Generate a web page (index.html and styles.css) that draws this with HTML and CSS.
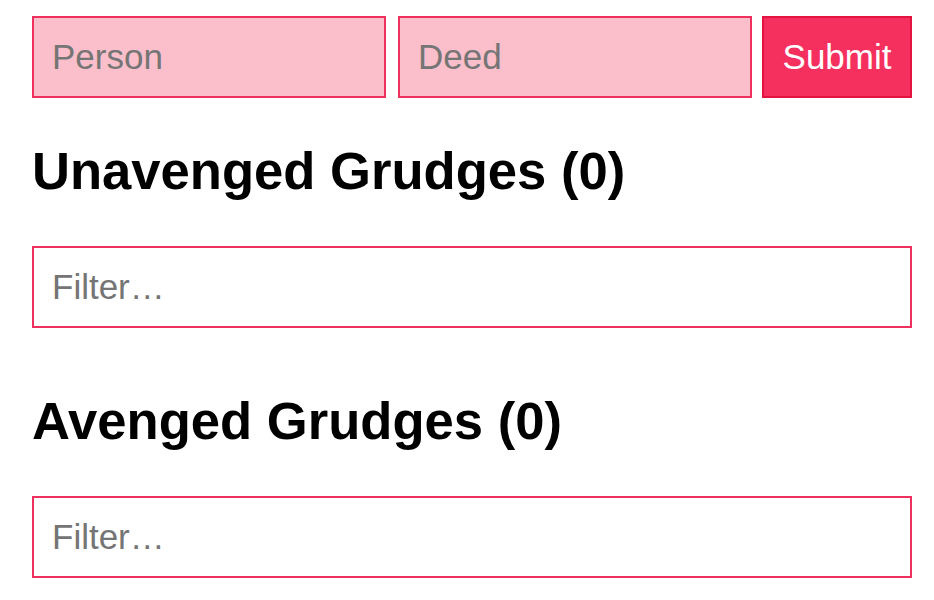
FILE: index.html
```html
<!DOCTYPE html>
<html>
<head>
<meta charset="utf-8">
<link rel="stylesheet" href="styles.css">
</head>
<body>
<main class="app">
  <form class="new-grudge">
    <input class="field field-person" type="text" placeholder="Person">
    <input class="field field-deed" type="text" placeholder="Deed">
    <button class="submit" type="button">Submit</button>
  </form>
  <section class="grudges grudges-unavenged">
    <h2 class="grudges-title">Unavenged Grudges (0)</h2>
    <input class="filter" type="text" placeholder="Filter…">
  </section>
  <section class="grudges grudges-avenged">
    <h2 class="grudges-title">Avenged Grudges (0)</h2>
    <input class="filter" type="text" placeholder="Filter…">
  </section>
</main>
</body>
</html>
```
FILE: styles.css
```css
html, body {
  margin: 0;
  padding: 0;
  background: #ffffff;
}

body {
  font-family: "Liberation Sans", Arial, sans-serif;
  color: #000000;
}

.app {
  width: 880px;
  padding: 16px 0 0 32px;
}

.new-grudge {
  display: flex;
  margin: 0;
}

.field,
.filter {
  box-sizing: border-box;
  height: 82px;
  border: 2px solid #f0305c;
  padding: 0 18px;
  font-family: "Liberation Sans", Arial, sans-serif;
  font-size: 35px;
  color: #000;
  outline: none;
  border-radius: 0;
}

.field::placeholder,
.filter::placeholder {
  color: #757575;
  opacity: 1;
}

.field {
  width: 354px;
  background: #fbbfcb;
}

.field-person {
  margin-right: 12px;
}

.field-deed {
  margin-right: 10px;
}

.submit {
  box-sizing: border-box;
  width: 150px;
  height: 82px;
  border: 2px solid #e3143f;
  background: #f52f5e;
  color: #ffffff;
  font-family: "Liberation Sans", Arial, sans-serif;
  font-size: 35px;
  padding: 0;
  border-radius: 0;
}

.grudges-unavenged {
  margin-top: 43px;
}

.grudges-avenged {
  margin-top: 63px;
}

.grudges-title {
  margin: 0 0 45px;
  font-size: 52.6px;
  line-height: 60px;
  font-weight: bold;
}

.filter {
  display: block;
  width: 880px;
  background: #ffffff;
}
```
